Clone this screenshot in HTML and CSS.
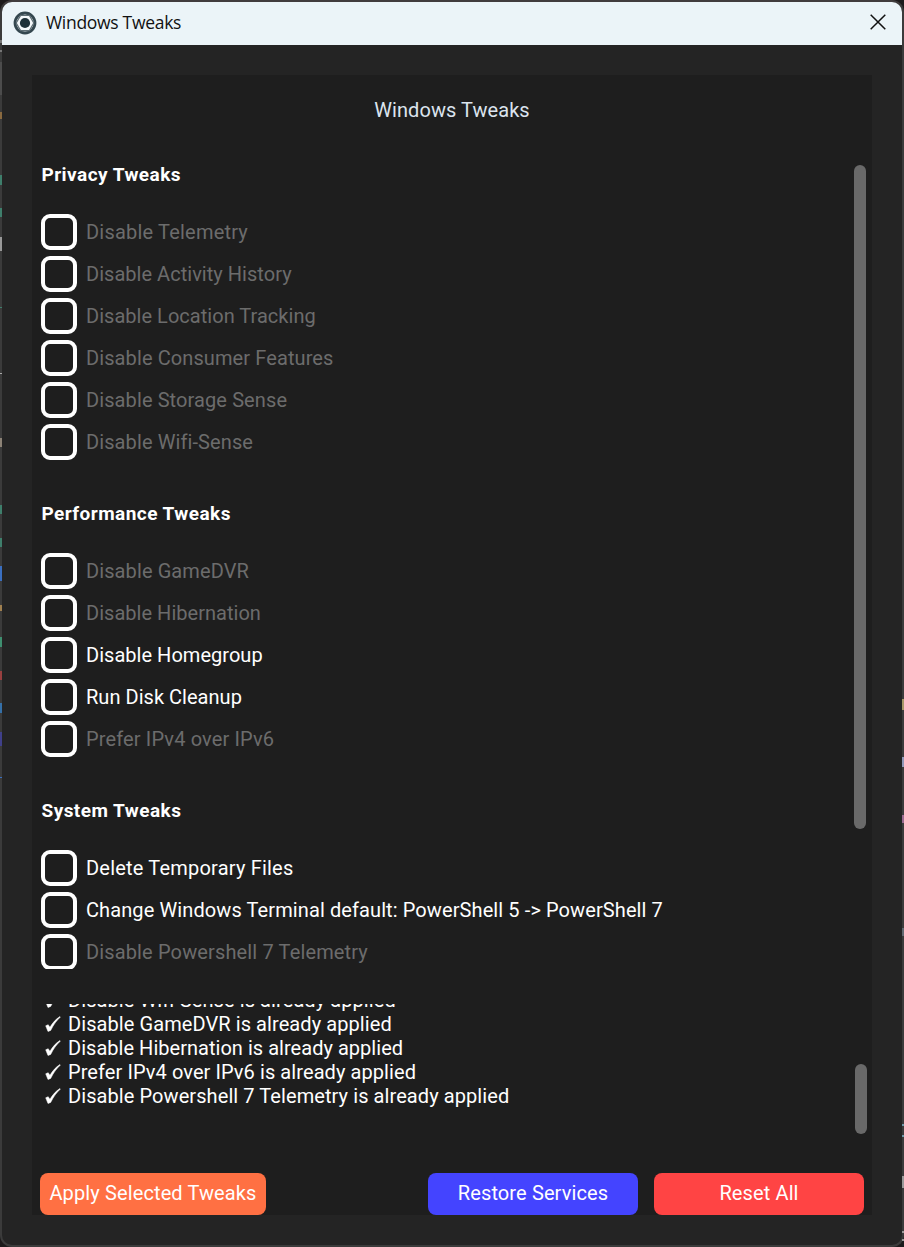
FILE: index.html
```html
<!DOCTYPE html>
<html lang="en">
<head>
<meta charset="utf-8">
<title>Windows Tweaks</title>
<link rel="stylesheet" href="styles.css">
</head>
<body>
<svg class="defs" width="0" height="0">
  <symbol id="check" viewBox="0 0 16 16"><path d="M.7 9.8 L3.2 8.7 L4.9 11.3 C7.6 6.9 11 3 14.9 .6 L15.4 1.1 C11.7 4.4 8.3 9 5.7 14.4 L3 15.5 Z" fill="#fff" stroke="#fff" stroke-width=".5"/></symbol>
</svg>
<div class="window">
  <header class="titlebar">
    <svg class="app-icon" width="24" height="24" viewBox="0 0 24 24">
      <circle cx="12" cy="12" r="10" fill="#f0f5f7" stroke="#34474f" stroke-width="2.8"/>
      <path d="M7.6 4.4h8.8l4.4 7.6-4.4 7.6H7.6L3.2 12z" fill="#f4f8fa" stroke="#5d6d74" stroke-width="1.2"/>
      <circle cx="12" cy="12" r="5.1" fill="#1d3038"/>
    </svg>
    <span class="caption">Windows Tweaks</span>
    <svg class="close" width="16" height="16" viewBox="0 0 16 16"><path d="M.7.7l14.6 14.6M15.3.7L.7 15.3" stroke="#111" stroke-width="1.5"/></svg>
  </header>
  <main class="panel">
    <h1 class="title">Windows Tweaks</h1>
    <div class="scroll">
      <div class="list">
        <section class="group">
          <h2 class="heading">Privacy Tweaks</h2>
          <label class="row off loose"><span class="box"></span><span>Disable Telemetry</span></label>
          <label class="row off tight"><span class="box"></span><span>Disable Activity History</span></label>
          <label class="row off tight"><span class="box"></span><span>Disable Location Tracking</span></label>
          <label class="row off"><span class="box"></span><span>Disable Consumer Features</span></label>
          <label class="row off"><span class="box"></span><span>Disable Storage Sense</span></label>
          <label class="row off"><span class="box"></span><span>Disable Wifi-Sense</span></label>
        </section>
        <section class="group">
          <h2 class="heading">Performance Tweaks</h2>
          <label class="row off"><span class="box"></span><span>Disable GameDVR</span></label>
          <label class="row off tight"><span class="box"></span><span>Disable Hibernation</span></label>
          <label class="row tight"><span class="box"></span><span>Disable Homegroup</span></label>
          <label class="row tight"><span class="box"></span><span>Run Disk Cleanup</span></label>
          <label class="row off medium"><span class="box"></span><span>Prefer IPv4 over IPv6</span></label>
        </section>
        <section class="group">
          <h2 class="heading">System Tweaks</h2>
          <label class="row loose"><span class="box"></span><span>Delete Temporary Files</span></label>
          <label class="row"><span class="box"></span><span>Change Windows Terminal default: PowerShell 5 -&gt; PowerShell 7</span></label>
          <label class="row off medium"><span class="box"></span><span>Disable Powershell 7 Telemetry</span></label>
        </section>
      </div>
      <div class="thumb"></div>
    </div>
    <div class="log">
      <div class="lines">
        <p class="line"><svg class="tick"><use href="#check"/></svg>Disable Wifi-Sense is already applied</p>
        <p class="line"><svg class="tick"><use href="#check"/></svg>Disable GameDVR is already applied</p>
        <p class="line tight"><svg class="tick"><use href="#check"/></svg>Disable Hibernation is already applied</p>
        <p class="line"><svg class="tick"><use href="#check"/></svg>Prefer IPv4 over IPv6 is already applied</p>
        <p class="line"><svg class="tick"><use href="#check"/></svg>Disable Powershell 7 Telemetry is already applied</p>
      </div>
      <div class="thumb small"></div>
    </div>
    <footer class="actions">
      <button class="btn apply">Apply Selected Tweaks</button>
      <button class="btn restore">Restore Services</button>
      <button class="btn reset">Reset All</button>
    </footer>
  </main>
</div>
</body>
</html>
```
FILE: styles.css
```css
* { box-sizing: border-box; }
body { margin: 0; width: 904px; height: 1247px; overflow: hidden; background: #1c1a1b; font-family: Roboto, sans-serif; font-size: 20px; color: #fff; }
/* slivers of the editor behind the window */
body::before, body::after { content: ""; position: absolute; top: 0; left: 0; width: 2px; height: 1247px; z-index: 1; }
body::before {
  background:
    linear-gradient(#777, #777) 0 40px / 2px 3px,
    linear-gradient(#777, #777) 0 50px / 2px 2px,
    linear-gradient(#4c4c4c, #4c4c4c) 0 62px / 2px 33px,
    linear-gradient(#8a6a40, #8a6a40) 0 112px / 2px 7px,
    linear-gradient(#3f7f6c, #3f7f6c) 0 175px / 2px 10px,
    linear-gradient(#3f7f6c, #3f7f6c) 0 208px / 2px 9px,
    linear-gradient(#999, #999) 0 237px / 2px 14px,
    linear-gradient(#3f7f6c, #3f7f6c) 0 307px / 2px 1px,
    linear-gradient(#aaa, #aaa) 0 373px / 2px 1px,
    linear-gradient(#8c8276, #8c8276) 0 438px / 2px 9px,
    linear-gradient(#3f7f6c, #3f7f6c) 0 505px / 2px 9px,
    linear-gradient(#3f7f6c, #3f7f6c) 0 538px / 2px 9px,
    linear-gradient(#3a6fc0, #3a6fc0) 0 566px / 2px 15px,
    linear-gradient(#a08050, #a08050) 0 605px / 2px 6px,
    linear-gradient(#3f8f70, #3f8f70) 0 637px / 2px 10px,
    linear-gradient(#984040, #984040) 0 671px / 2px 9px,
    linear-gradient(#3570a8, #3570a8) 0 703px / 2px 10px,
    linear-gradient(#40408a, #40408a) 0 732px / 2px 14px,
    linear-gradient(#3a6fc0, #3a6fc0) 0 777px / 2px 1px;
  background-repeat: no-repeat;
}
body::after {
  left: 902px;
  background:
    linear-gradient(#a89868, #a89868) 0 699px / 2px 11px,
    linear-gradient(#8f98b8, #8f98b8) 0 757px / 2px 10px,
    linear-gradient(#9a6a90, #9a6a90) 0 815px / 2px 8px,
    linear-gradient(#606870, #606870) 0 928px / 2px 8px,
    linear-gradient(#6c98a8, #6c98a8) 0 1124px / 2px 2px,
    linear-gradient(#6c98a8, #6c98a8) 0 1135px / 2px 2px,
    linear-gradient(#999, #999) 0 1176px / 2px 12px,
    linear-gradient(#999, #999) 0 1231px / 2px 2px,
    linear-gradient(#999, #999) 0 1239px / 2px 2px;
  background-repeat: no-repeat;
}
.defs { position: absolute; }
.window { width: 904px; height: 1247px; border: 2px solid #3b3b3b; border-top-color: #403c3d; border-radius: 12px; background: #242424; overflow: hidden; }
.titlebar { height: 43px; background: #ebf4f8; display: flex; align-items: center; padding: 0 16px 0 11px; }
.app-icon { margin-top: -2px; }
.caption { flex: 1; margin-left: 9px; color: #111; font-family: "Open Sans", sans-serif; font-size: 17.5px; letter-spacing: -.3px; line-height: 24px; margin-top: -3px; }
.close { margin-top: -3px; }
.panel { margin: 30px 28px 0 30px; width: 840px; height: 1140px; background: #1e1e1e; display: flex; flex-direction: column; }
.title { margin: 0; height: 90px; padding-top: 23px; line-height: 24px; font-size: 20px; font-weight: 400; text-align: center; color: #dce4ee; letter-spacing: .06px; }
.scroll { height: 804px; display: flex; justify-content: space-between; padding: 0 6px 0 9px; overflow: hidden; }
.group { padding-bottom: 38px; }
.group + .group { padding-top: 0; }
.heading { margin: 0; height: 49px; line-height: 20px; font-size: 19px; font-weight: 700; letter-spacing: .45px; padding-left: .5px; }
.row { height: 36px; margin-bottom: 6px; display: flex; align-items: center; gap: 9px; line-height: 24px; letter-spacing: .1px; white-space: nowrap; }
.off { color: #6c6c6c; }
.loose { letter-spacing: .2px; }
.medium { letter-spacing: .14px; }
.box { width: 36px; height: 36px; border: 4px solid #fff; border-radius: 9px; }
.thumb { width: 12px; height: 664px; border-radius: 6px; background: #696969; }
.log { margin-top: 35px; height: 130px; overflow: hidden; display: flex; justify-content: space-between; padding: 0 5px 0 13px; }
.lines { margin-top: -16px; }
.line { margin: 0; height: 24px; line-height: 24px; display: flex; align-items: center; letter-spacing: .08px; white-space: nowrap; }
.tight { letter-spacing: .03px; }
.tick { width: 16px; height: 16px; margin-right: 7px; }
.small { height: 70px; align-self: flex-end; }
.actions { margin-top: 39px; height: 42px; padding: 0 8px; display: flex; }
.btn { height: 42px; border: 0; border-radius: 8px; padding: 0 0 2px; font: 20px/24px Roboto, sans-serif; color: #fff; letter-spacing: .12px; width: 210px; }
.apply { width: 226px; background: #ff7043; }
.restore { margin-left: auto; margin-right: 16px; background: #4444ff; }
.reset { background: #ff4444; }
```
